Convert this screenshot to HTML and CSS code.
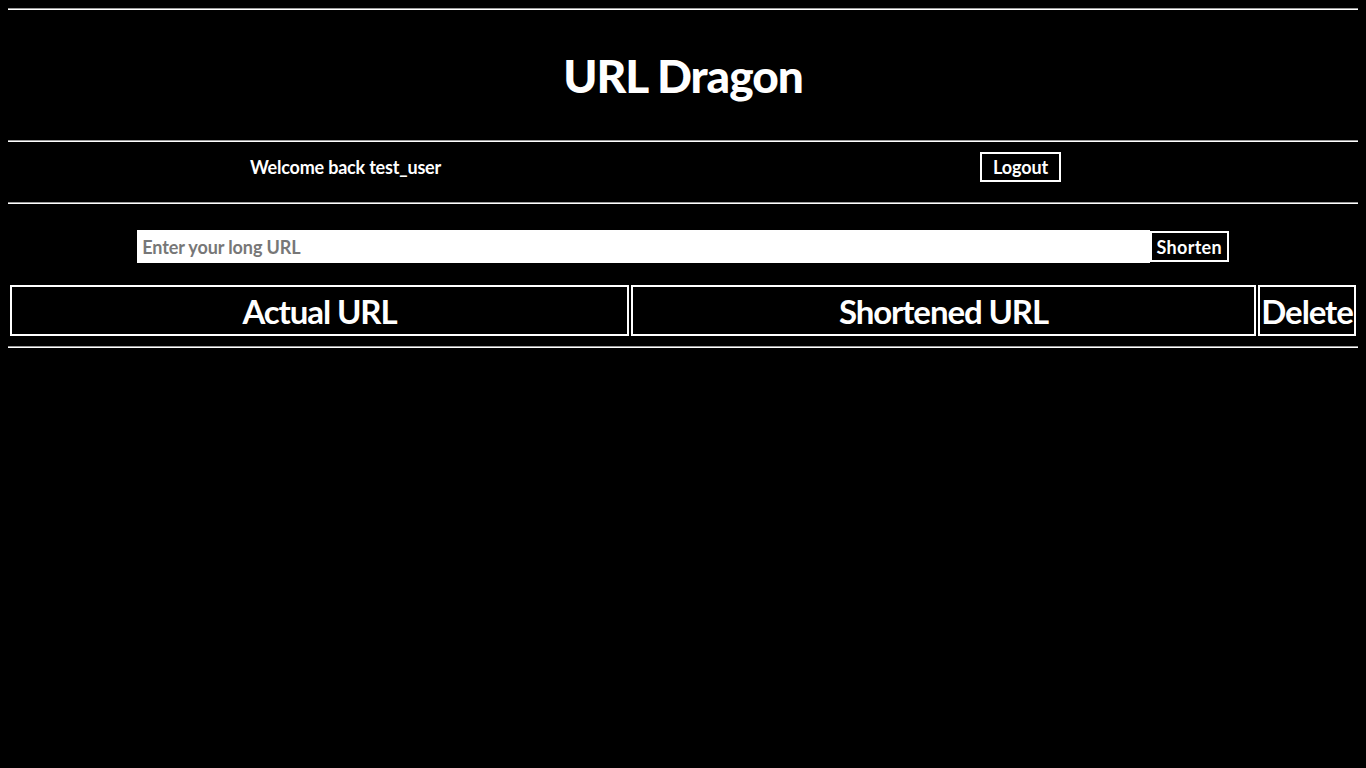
FILE: index.html
```html
<!DOCTYPE html>
<html>
<head>
<meta charset="utf-8">
<title>URL Dragon</title>
<link rel="stylesheet" href="styles.css">
</head>
<body>
<hr class="rule rule-top">
<h1 class="title">URL Dragon</h1>
<hr class="rule">
<div class="userbar">
  <div class="half"><span class="welcome">Welcome back test_user</span></div>
  <div class="half"><button class="btn logout">Logout</button></div>
</div>
<hr class="rule">
<form class="shorten-form">
  <input class="url-input" type="text" placeholder="Enter your long URL"><button class="btn shorten" type="button">Shorten</button>
</form>
<table class="links">
  <thead>
    <tr>
      <th class="col-actual">Actual URL</th>
      <th class="col-short">Shortened URL</th>
      <th class="col-del">Delete</th>
    </tr>
  </thead>
</table>
<hr class="rule">
</body>
</html>
```
FILE: styles.css
```css
html, body {
  background: #000;
}
body {
  margin: 8px;
  color: #fff;
  font-family: Lato, "Noto Sans", sans-serif;
  font-weight: 700;
}
.rule {
  margin: 8px 0;
  height: 0;
  border: 0;
  border-top: 1px solid #9a9a9a;
  border-bottom: 1px solid #fff;
}
.rule-top {
  margin-top: 0;
}
.title {
  margin: 0;
  height: 114px;
  display: flex;
  align-items: center;
  justify-content: center;
  font-size: 46px;
  letter-spacing: -1px;
  font-weight: 900;
}
.userbar {
  display: flex;
  align-items: center;
  padding: 2px 0 12px;
}
.half {
  flex: 1;
  text-align: center;
}
.welcome {
  font-size: 18px;
  letter-spacing: -0.2px;
}
.btn {
  background: #000;
  color: #fff;
  border: 2px solid #fff;
  font-family: inherit;
  font-weight: 700;
  font-size: 18px;
  letter-spacing: -0.1px;
  padding: 0 11px;
  height: 30px;
  cursor: pointer;
}
.shorten-form {
  display: flex;
  justify-content: center;
  align-items: center;
  margin: 26px 0 20px;
}
.url-input {
  width: 75%;
  box-sizing: border-box;
  height: 33px;
  border: 0;
  padding: 0 5px;
  font-family: inherit;
  font-weight: 700;
  font-size: 18px;
  letter-spacing: -0.1px;
  outline: none;
}
.url-input::placeholder {
  color: #777;
}
.shorten {
  height: 31px;
  width: 79px;
  padding: 0;
  letter-spacing: 0.3px;
}
.links {
  width: 100%;
  border-spacing: 2px;
  table-layout: fixed;
}
.links th {
  border: 2px solid #fff;
  height: 47px;
  padding: 0;
  font-size: 33px;
  letter-spacing: -1.1px;
  white-space: nowrap;
  overflow: hidden;
}
.col-actual { width: 615px; }
.col-short { width: 621px; }
```
